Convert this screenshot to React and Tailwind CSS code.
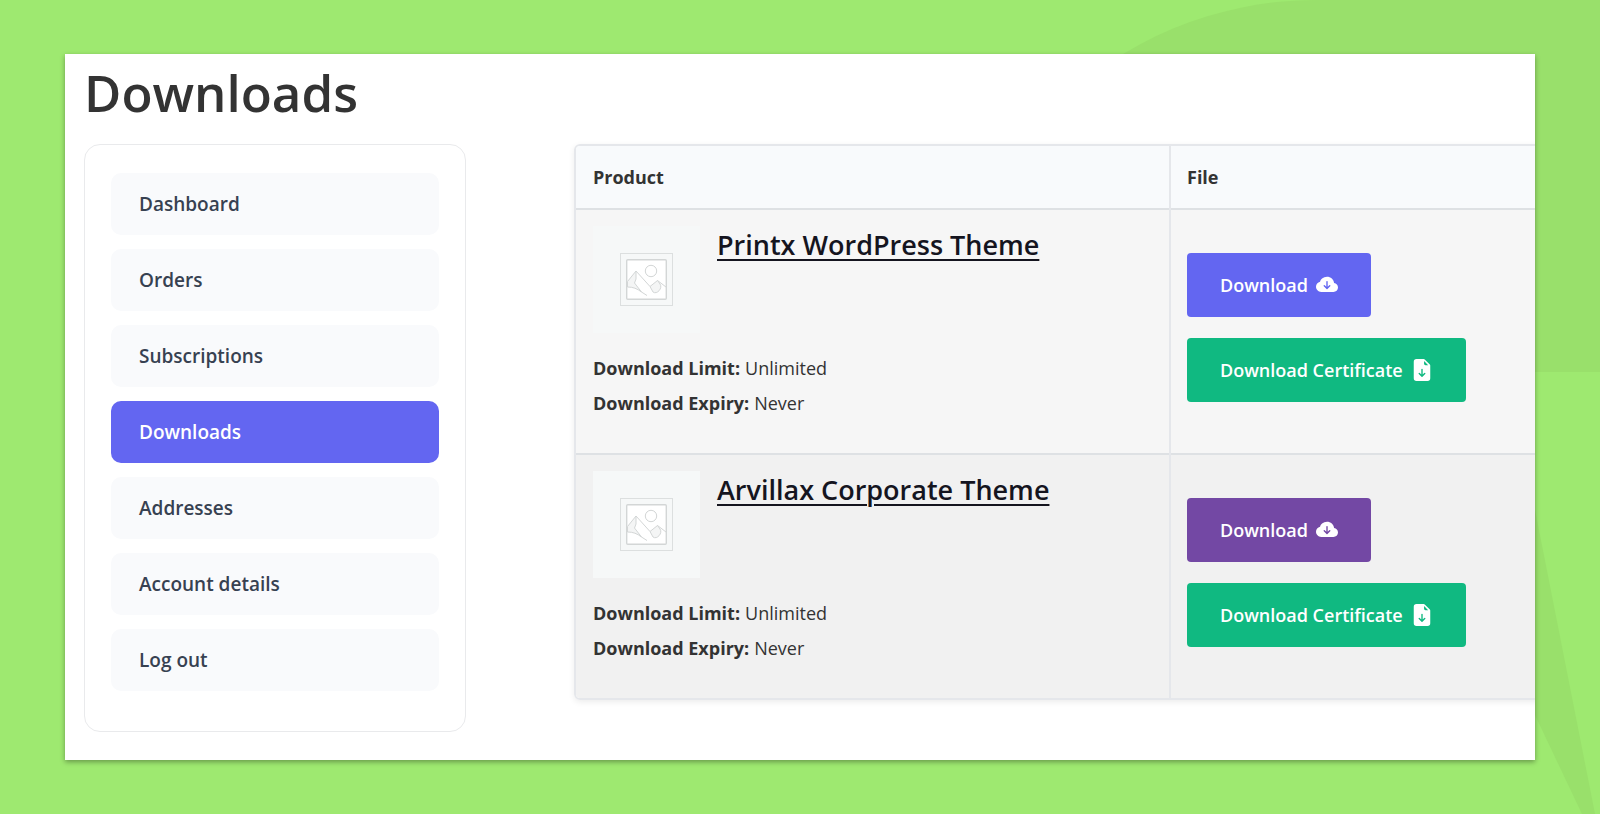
import { BsCloudArrowDownFill, BsFileEarmarkArrowDownFill } from 'react-icons/bs'
import clsx from 'clsx'

const navItems = ['Dashboard', 'Orders', 'Subscriptions', 'Downloads', 'Addresses', 'Account details', 'Log out']

const products = [
  { name: 'Printx WordPress Theme', row: 'bg-[#f6f6f6]', button: 'bg-[#6366f1]' },
  { name: 'Arvillax Corporate Theme', row: 'bg-[#f1f1f1]', button: 'bg-[#7348a4]' },
]

export default function App() {
  return (
    <div className="relative min-h-screen overflow-hidden bg-[#9ee970] px-[65px] pt-[54px] pb-[54px] font-['Open_Sans','Noto_Sans',sans-serif] text-[#333]">
      <Backdrop />
      <main className="relative overflow-hidden bg-white px-[19px] pt-2 pb-7 shadow-[0_2px_5px_rgba(0,0,0,0.35)]">
        <h1 className="text-[51px] leading-[60px] font-semibold">Downloads</h1>
        <div className="mt-[22px] flex items-start gap-[108px]">
          <AccountNav active="Downloads" />
          <DownloadsTable />
        </div>
      </main>
    </div>
  )
}

function Backdrop() {
  return (
    <svg className="absolute top-0 right-0" width="520" height="814" viewBox="0 0 520 814" fill="#99e06b" aria-hidden="true">
      <path d="M520 0H236A372 372 0 0 0 -136 372H520Z" />
      <path d="M455 510L515 814H502L455 715Z" />
    </svg>
  )
}

function AccountNav({ active }) {
  return (
    <nav className="w-[382px] shrink-0 rounded-2xl border border-[#e9eaec] px-[26px] pt-7 pb-10">
      <ul className="flex flex-col gap-[14px]">
        {navItems.map((item) => (
          <li key={item}>
            <a
              href="#"
              className={clsx(
                'block rounded-[10px] px-7 py-4 text-[19px] leading-[30px] font-semibold',
                item === active ? 'bg-[#6366f1] text-white' : 'bg-[#f9fafc] text-[#374151]'
              )}
            >
              {item}
            </a>
          </li>
        ))}
      </ul>
    </nav>
  )
}

function DownloadsTable() {
  return (
    <div className="min-w-[1200px] flex-1 overflow-hidden rounded-md border-2 border-[#e5e7eb] shadow-[0_2px_6px_rgba(0,0,0,0.08)]">
      <table className="w-full table-fixed text-left">
        <thead>
          <tr className="border-b-2 border-[#dee1e4] bg-[#f8fafc] text-[18px] leading-[30px]">
            <th className="w-[594px] border-r-2 border-[#e5e7eb] px-[17px] py-4 font-bold">Product</th>
            <th className="px-4 py-4 font-bold">File</th>
          </tr>
        </thead>
        <tbody>
          {products.map((product) => (
            <tr key={product.name} className={clsx('border-b-2 border-[#dee1e4] last:border-b-0', product.row)}>
              <td className="border-r-2 border-[#e5e7eb] px-[17px] pt-4 pb-8 align-top">
                <div className="flex items-start gap-[17px]">
                  <Thumbnail />
                  <h2 className="text-[27px] leading-[38px] font-semibold">
                    <a href="#" className="text-[#15151f] underline decoration-2 underline-offset-4">
                      {product.name}
                    </a>
                  </h2>
                </div>
                <dl className="mt-[18px] text-[18px] leading-[35px]">
                  <Detail label="Download Limit:" value="Unlimited" />
                  <Detail label="Download Expiry:" value="Never" />
                </dl>
              </td>
              <td className="px-4 pt-[43px] align-top">
                <div className="flex flex-col items-start gap-[21px]">
                  <button type="button" className={clsx('flex items-center gap-2 rounded px-[33px] py-4 text-[18px] leading-8 font-semibold text-white', product.button)}>
                    Download
                    <BsCloudArrowDownFill className="h-[22px] w-[22px]" />
                  </button>
                  <button type="button" className="flex items-center gap-2 rounded bg-[#10b981] px-[33px] py-4 text-[18px] leading-8 font-semibold text-white">
                    Download Certificate
                    <BsFileEarmarkArrowDownFill className="h-[22px] w-[22px]" />
                  </button>
                </div>
              </td>
            </tr>
          ))}
        </tbody>
      </table>
    </div>
  )
}

function Detail({ label, value }) {
  return (
    <div className="flex gap-[5px]">
      <dt className="font-bold">{label}</dt>
      <dd>{value}</dd>
    </div>
  )
}

function Thumbnail() {
  return (
    <svg className="h-[107px] w-[107px] shrink-0" viewBox="0 0 107 107" fill="none" role="img" aria-label="Product image">
      <rect width="107" height="107" fill="#f6f8f8" />
      <rect x="27.5" y="27.5" width="52" height="52" stroke="#dcdfdf" />
      <rect x="33.7" y="33.7" width="39.6" height="39.6" rx="1" fill="#fff" stroke="#d3d6d6" strokeWidth="1.4" />
      <g stroke="#d3d6d6">
        <path d="M34.5 55.5L43 45V53L41.5 57L48.5 66C44 62.5 40 61 34.5 61Z" fill="#f4f5f5" />
        <path d="M57 60.5L64.5 54.5L67 58C70 62 64 69 60 66Z" fill="#f4f5f5" />
        <path d="M43 45L57 60.5M64.5 54.5L73 61M48.5 66L54 69.5" />
        <circle cx="58" cy="45" r="5.7" />
      </g>
    </svg>
  )
}
